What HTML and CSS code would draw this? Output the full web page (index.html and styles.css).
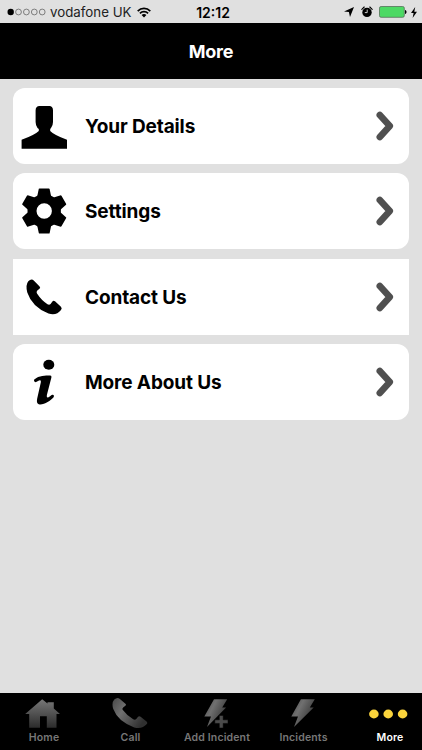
FILE: index.html
```
<!DOCTYPE html>
<html lang="en">
<head>
    <meta charset="UTF-8">
    <meta name="viewport" content="width=device-width, initial-scale=1.0">
    <title>More</title>
    <link rel="stylesheet" href="styles.css">
</head>
<body>
    <div class="status-bar">
        <div class="status-left">
            <svg class="signal" width="39" height="8" viewBox="0 0 39 8">
                <circle cx="3.7" cy="4" r="3.2"/>
                <g fill="none" stroke="#555" stroke-width="0.7">
                    <circle cx="11.5" cy="4" r="2.9"/>
                    <circle cx="19.4" cy="4" r="2.9"/>
                    <circle cx="27.3" cy="4" r="2.9"/>
                    <circle cx="35.2" cy="4" r="2.9"/>
                </g>
            </svg>
            <span class="carrier">vodafone UK</span>
            <svg class="wifi" width="14" height="11" viewBox="0 0 14 11">
                <g fill="none" stroke="#000" stroke-width="1.7">
                    <path d="M0.7 4.1C4.3 0.5 9.7 0.5 13.3 4.1"/>
                    <path d="M2.9 6.4C5.2 4.1 8.8 4.1 11.1 6.4"/>
                </g>
                <path d="M4.6 8C6 6.7 8 6.7 9.4 8L7 10.5Z"/>
            </svg>
        </div>
        <span class="time">12:12</span>
        <div class="status-right">
            <svg width="10" height="10" viewBox="0 0 10 10"><path d="M10 0L6 10L4.9 5.1L0 4.5Z"/></svg>
            <svg class="alarm" width="12" height="12" viewBox="0 0 12 12">
                <circle cx="6" cy="6.4" r="4.7"/>
                <path d="M0.8 3.3L3.2 1M11.2 3.3L8.8 1" stroke="#000" stroke-width="1.1" stroke-linecap="round"/>
                <path d="M6.2 3.6V6.6H3.8" fill="none" stroke="#e0e0e0" stroke-width="0.9"/>
            </svg>
            <svg class="battery" width="28" height="12" viewBox="0 0 28 12">
                <rect x="0.5" y="0.5" width="24.8" height="10.8" rx="1.6" fill="#4cd964" stroke="#56705a" stroke-width="0.8"/>
                <path d="M26 4C28 4.3 28 7.7 26 8Z"/>
            </svg>
            <svg class="charging" width="6" height="11" viewBox="0 0 6 11"><path d="M4.2 0L0 6H2.6L1.6 11L6 4.7H3.3Z"/></svg>
        </div>
    </div>

    <header class="header">
        <h1>More</h1>
    </header>

    <main class="menu">
        <div class="menu-item">
            <svg class="icon" viewBox="0 0 48 48">
                <path d="M19.5 4H29.3Q33 4 33 8.5V20Q33 23.5 31 26L30.2 27V29Q34 33 47 37.8V46.8H1.6V37.8Q14.7 33 18.8 29V27L17.5 26Q15.6 23.5 15.6 20V8.5Q15.6 4 19.5 4Z"/>
            </svg>
            <span class="label">Your Details</span>
            <svg class="arrow" viewBox="0 0 18 32"><path d="M3.8 5L13.8 16L3.8 27"/></svg>
        </div>
        <div class="menu-item">
            <svg class="icon" viewBox="0 0 48 48">
                <defs>
                    <path id="tooth" d="M17.1 10L18.8 1.7Q19 1.4 19.6 1.4H28.8Q29.4 1.4 29.6 1.9L31.3 10Z"/>
                </defs>
                <circle cx="24.2" cy="24" r="12.2" fill="none" stroke="#000" stroke-width="9"/>
                <use href="#tooth"/>
                <use href="#tooth" transform="rotate(60 24.2 24)"/>
                <use href="#tooth" transform="rotate(120 24.2 24)"/>
                <use href="#tooth" transform="rotate(180 24.2 24)"/>
                <use href="#tooth" transform="rotate(240 24.2 24)"/>
                <use href="#tooth" transform="rotate(300 24.2 24)"/>
            </svg>
            <span class="label">Settings</span>
            <svg class="arrow" viewBox="0 0 18 32"><path d="M3.8 5L13.8 16L3.8 27"/></svg>
        </div>
        <div class="menu-item square">
            <svg class="icon" viewBox="0 0 48 48">
                <path id="handset" d="M8.3 8.3Q11.5 5 14 7.8L19.6 13.4Q20.8 14.6 19.5 15.7L17.3 17.6Q16 19 17 20.6Q21.5 27.5 27.5 31.3Q29.3 32.4 30.6 31L32.4 28.4Q33.5 27 35 28.3L40.7 33.6Q42.6 35.2 41 37Q36.5 43 28.5 40.6Q12 34 7.3 19.5Q5.3 12 8.3 8.3Z"/>
            </svg>
            <span class="label">Contact Us</span>
            <svg class="arrow" viewBox="0 0 18 32"><path d="M3.8 5L13.8 16L3.8 27"/></svg>
        </div>
        <div class="menu-item">
            <svg class="icon" viewBox="0 0 48 48">
                <ellipse cx="28.8" cy="6.8" rx="5.5" ry="5"/>
                <path d="M14 21.7C19.5 17.2 25 17.8 30.3 17.6Q31.8 17.7 31.4 19.5L27 36.5Q26.2 40.3 28.5 39.3C30.5 38.3 31.5 36.3 33 36.8Q34.8 37.5 33.6 39.3C30.5 42.5 25 46.8 19.8 46.6C16.8 46 16.6 43.8 17.2 40.5L20.8 24.5Q21.5 21.5 19 22.4L15.6 24.2Q13.4 23.5 14 21.7Z"/>
            </svg>
            <span class="label">More About Us</span>
            <svg class="arrow" viewBox="0 0 18 32"><path d="M3.8 5L13.8 16L3.8 27"/></svg>
        </div>
    </main>

    <nav class="tab-bar">
        <div class="tab">
            <svg width="38" height="31" viewBox="0 0 38 31">
                <defs>
                    <linearGradient id="fade" x1="0" y1="0" x2="0" y2="1">
                        <stop offset="0" stop-color="#777"/>
                        <stop offset="1" stop-color="#2c2c2c"/>
                    </linearGradient>
                    <linearGradient id="shine" x1="0" y1="0" x2="1" y2="0.6">
                        <stop offset="0" stop-color="#484848"/>
                        <stop offset="0.4" stop-color="#707070"/>
                        <stop offset="1" stop-color="#303030"/>
                    </linearGradient>
                </defs>
                <path fill="url(#fade)" d="M17.2 2.3L22.5 6.6V5.2H28.8V11.6L35 17H31.5V30.8H21.8V19.3H15V30.8H4.2V17H0.2Z"/>
            </svg>
            <span>Home</span>
        </div>
        <div class="tab">
            <svg width="38" height="31" viewBox="6 5.5 38.5 35.8" preserveAspectRatio="none">
                <use href="#handset" fill="url(#shine)"/>
            </svg>
            <span>Call</span>
        </div>
        <div class="tab">
            <svg width="36" height="31" viewBox="0 0 36 31">
                <path fill="url(#shine)" d="M15 2.3H28.2L23.2 10.4H27.1L8 30L12 19.4H5.3Z"/>
                <path fill="#4b4b4b" stroke="#000" stroke-width="0.5" d="M20.3 18.4H24.2V22.8H29V26.4H24.2V31H20.3V26.4H15.8V22.8H20.3Z"/>
            </svg>
            <span>Add Incident</span>
        </div>
        <div class="tab">
            <svg width="36" height="31" viewBox="0 0 36 31">
                <path fill="url(#shine)" d="M14.9 2.3H28.8L23.8 10.4H27.7L8 30L12 19.4H5.3Z"/>
            </svg>
            <span>Incidents</span>
        </div>
        <div class="tab active">
            <svg width="42" height="31" viewBox="0 0 42 31" fill="#fbd43c">
                <ellipse cx="4.9" cy="17" rx="4.8" ry="4.4"/>
                <ellipse cx="19.2" cy="17" rx="4.8" ry="4.4"/>
                <ellipse cx="33.6" cy="17" rx="4.8" ry="4.4"/>
            </svg>
            <span>More</span>
        </div>
    </nav>
</body>
</html>
```
FILE: styles.css
```
* {
    box-sizing: border-box;
}
body {
    margin: 0;
    height: 750px;
    display: flex;
    flex-direction: column;
    overflow: hidden;
    background-color: #e0e0e0;
    color: black;
    font-family: Inter, "Liberation Sans", sans-serif;
}
svg {
    display: block;
    flex: none;
}
.status-bar {
    height: 23px;
    padding: 1px 5px 0 7px;
    display: grid;
    grid-template-columns: 1fr auto 1fr;
    align-items: center;
}
.status-left,
.status-right {
    display: flex;
    align-items: center;
}
.status-right {
    justify-content: flex-end;
}
.carrier {
    margin: 0 6px 0 4px;
    font-size: 13.3px;
    white-space: nowrap;
    color: #222;
}
.time {
    padding-left: 2px;
    font-size: 14px;
    font-weight: 600;
}
.alarm {
    margin: 0 6px 0 7px;
}
.charging {
    margin-left: 4px;
}
.header {
    height: 56px;
    background-color: black;
    color: white;
    display: flex;
    justify-content: center;
    align-items: center;
}
.header h1 {
    margin: 0;
    font-size: 18px;
    font-weight: 700;
    letter-spacing: -0.2px;
}
.menu {
    flex: 1;
    padding: 9px 13px;
    display: flex;
    flex-direction: column;
    gap: 9.4px;
}
.menu-item {
    height: 76px;
    padding: 0 15px 0 7px;
    display: flex;
    align-items: center;
    background-color: white;
    border-radius: 12px;
}
.menu-item.square {
    border-radius: 0;
}
.icon {
    width: 48px;
    height: 48px;
}
.label {
    flex: 1;
    margin-left: 17px;
    padding-top: 1px;
    font-size: 19px;
    font-weight: 700;
    letter-spacing: -0.12px;
}
.arrow {
    width: 18px;
    height: 32px;
    fill: none;
    stroke: #505050;
    stroke-width: 6.6;
    stroke-linecap: round;
    stroke-linejoin: round;
}
.tab-bar {
    height: 57px;
    padding: 4px 0 0 12px;
    display: flex;
    gap: 22.5px;
    background-color: black;
}
.tab {
    width: 64px;
    flex: none;
    display: flex;
    flex-direction: column;
    align-items: center;
    gap: 2px;
    color: #777;
    font-size: 10.5px;
    font-weight: 600;
    letter-spacing: 0.15px;
    line-height: 15px;
    white-space: nowrap;
}
.tab.active {
    color: white;
}
```
